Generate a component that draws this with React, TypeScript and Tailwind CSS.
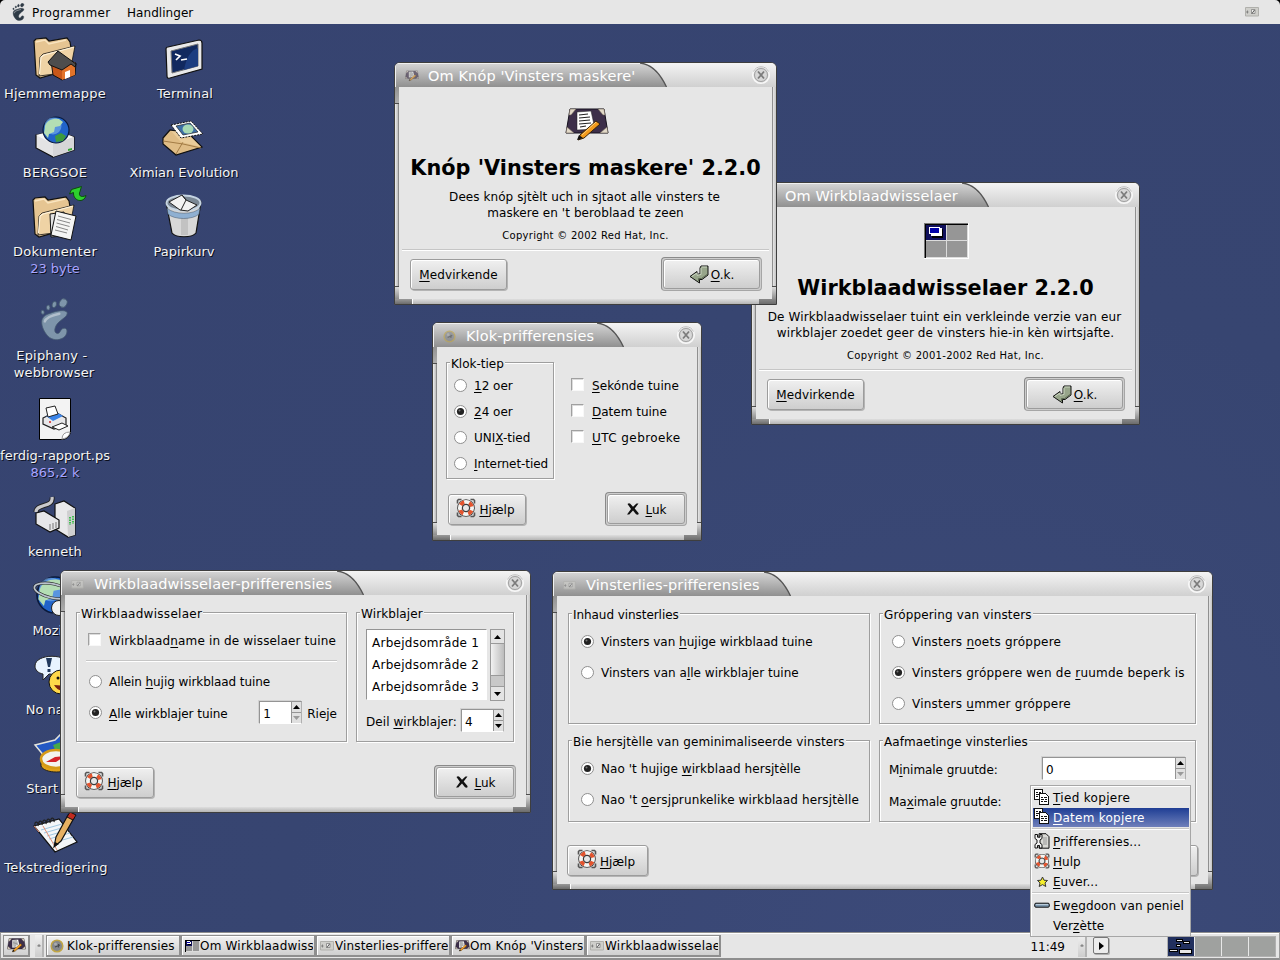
import React from "react";

/* ---------- text with a marked access key: "_Hjælp" ---------- */
function Key({ t, c = "" }: { t: string; c?: string }) {
  const i = t.indexOf("_");
  const cls = "inline-block whitespace-pre pt-[2px] " + c;
  if (i < 0) return <span className={cls}>{t}</span>;
  return (
    <span className={cls}>
      {t.slice(0, i)}
      <span className="underline decoration-1 underline-offset-2">{t[i + 1]}</span>
      {t.slice(i + 2)}
    </span>
  );
}

/* ---------- small icons ---------- */
function DeskPad({ className }: { className: string }) {
  return (
    <svg viewBox="0 0 44 34" className={className}>
      <path d="M5 1H39L43 25H1Z" fill="#3d2f4a" stroke="#15101c" />
      <path d="M5 1h6l-5 6-2 0zM39 1h-6l5 6h2zM1 25l1-6 7 6zM43 25l-1-6-7 6z" fill="#e2d9c8" stroke="#6b6257" strokeWidth=".6" />
      <path d="M12 4l14-1 4 18-18 1z" fill="#fff" stroke="#222" strokeWidth=".5" />
      <path d="M14 7l9-1M14 10l11-1M14 13l11-1M14 16l12-1M15 19l6-1" stroke="#222" strokeWidth="1.100" />
      <path d="M13 32l2-5L31 13l4 3L19 30z" fill="#f39a1c" stroke="#3a2308" />
      <path d="M17 27L31 14" stroke="#ffd27a" />
      <path d="M12 32l2-5 4 3z" fill="#111" />
    </svg>
  );
}
function PagerIcon({ className }: { className: string }) {
  return (
    <svg viewBox="0 0 45 36" className={className} shapeRendering="crispEdges">
      <path d="M0 0h45v36H0z" fill="#fff" />
      <path d="M0 0h44v35H0z" fill="#777" />
      <path d="M1 1h43v34H1z" fill="#000" />
      <path d="M2 2h42v33H2z" fill="#dcdcdc" />
      <path d="M2 2h20v15H2z" fill="#10105c" />
      <path d="M23 2h20v15H23zM2 18h20v16H2zM23 18h20v16H23z" fill="#969696" />
      <path d="M8 6h11v9H8z" fill="#000" />
      <path d="M7 5h11v8H7z" fill="#fff" />
      <path d="M5 4h11v7H5z" fill="#fff" />
      <path d="M6 5h9v5H6z" fill="#0000a8" />
    </svg>
  );
}
function ListIcon({ className }: { className: string }) {
  return (
    <svg viewBox="0 0 14 10" className={className}>
      <path d="M.5.5h13v8.500H.5z" fill="#cfcfcb" stroke="#b0b0ac" />
      <path d="M1 5h2.500M2.500 3.500v3" stroke="#777" strokeWidth=".8" />
      <path d="M6.500 2.500h3.500v4H6.500z" fill="#f2f2f0" stroke="#777" strokeWidth=".7" />
      <path d="M9.500 3L7 6.500" stroke="#444" strokeWidth=".9" />
    </svg>
  );
}
function ClockIcon({ className }: { className: string }) {
  return (
    <svg viewBox="0 0 14 14" className={className}>
      <circle cx="7" cy="7" r="5.800" fill="#85888c" stroke="#c0a545" strokeWidth="1.500" />
      <path d="M5 8l5-2M8.500 5v3.500" stroke="#45484c" strokeWidth="1.200" />
      <circle cx="5.500" cy="5" r="1.500" fill="#a9acb0" />
    </svg>
  );
}
function BuoyIcon({ className }: { className: string }) {
  return (
    <svg viewBox="0 0 20 20" className={className}>
      <path d="M1.500 5.500V2.500l1-1h3M14.500 1.500h3l1 1v3M18.500 14.500v3l-1 1h-3M5.500 18.500h-3l-1-1v-3" fill="none" stroke="#555" strokeWidth="1.600" />
      <circle cx="10" cy="10" r="8.800" fill="#3a3a3a" />
      <circle cx="10" cy="10" r="6.100" fill="none" stroke="#f4f4f1" strokeWidth="3.800" />
      <circle cx="10" cy="10" r="6.100" fill="none" stroke="#e4532d" strokeWidth="3.800" strokeDasharray="4.400 5.182" strokeDashoffset="-2.600" />
      <circle cx="10" cy="10" r="3.600" fill="#e6e6e6" stroke="#333" />
    </svg>
  );
}
function OkIcon() {
  return (
    <svg viewBox="0 0 20 19" className="h-[19px] w-5">
      <path d="M12 1h7v9l-6 4.500H10.500V18L1 11.500l7-5V9h3V3z" fill="#97a58a" stroke="#111" />
      <path d="M12 3v6.500l-4 .8V8L2.800 11.500M12.500 2H18" fill="none" stroke="#cbd5c1" />
      <path d="M18 9.500l-5.500 4H9.500v2.500" fill="none" stroke="#5d6a52" />
    </svg>
  );
}
function CloseX() {
  return (
    <svg viewBox="0 0 14 14" className="mb-px h-[14px] w-[14px]">
      <path d="M1.500 2q1.500-1.200 2.800-.2L7 4.800 10.500 1.500h2L8.700 6.500l3.800 4.500q.5 1.500-1 1.700-1 0-1.700-.7L7 8.600 3.300 12.500H1L5 7z" fill="#111" />
    </svg>
  );
}
function Foot({ className, a, b }: { className: string; a: string; b: string }) {
  return (
    <svg viewBox="0 0 30 44" className={className}>
      <g fill={a} stroke={b} strokeWidth=".8">
        <ellipse cx="24" cy="5" rx="3.800" ry="4.600" transform="rotate(30 24 5)" />
        <ellipse cx="14.800" cy="6.500" rx="2.200" ry="3.200" transform="rotate(15 14.800 6.500)" />
        <ellipse cx="8.500" cy="9.700" rx="1.800" ry="2.600" />
        <ellipse cx="2.800" cy="14.500" rx="1.600" ry="2.100" transform="rotate(-15 2.800 14.500)" />
        <path d="M11 15.500C17 13 26 11.500 28 14.500 29.500 19 21 22 17.500 27 14.500 31.500 14.500 36 18 36.500 21.500 36.500 20.500 31.500 25 31 29.500 31 28.500 38 24 41 19 44 12.500 43.500 8 39 3.500 34 1 27.500 2 22.500 3 18.500 7 16.500 11 15.500z" />
      </g>
      <path d="M5 24c1-4 6-6 15-8" stroke="#fff" strokeOpacity=".4" strokeWidth="2.500" fill="none" strokeLinecap="round" />
    </svg>
  );
}
function CopyIcon() {
  return (
    <svg viewBox="0 0 16 16" className="h-4 w-4" shapeRendering="crispEdges">
      <path d="M.5.5h8v10h-8z" fill="#fff" stroke="#111" />
      <path d="M2 3.500h2m1 0h2M2 5.500h3M2 7.500h2" stroke="#111" />
      <path d="M5.500 4.500h6l3 3v8h-9z" fill="#fff" stroke="#111" />
      <path d="M7 8.500h2m1 0h3M7 10.500h3m1 0h2M7 12.500h2m1 0h3" stroke="#111" />
    </svg>
  );
}
function PrefIcon() {
  return (
    <svg viewBox="0 0 16 16" className="h-4 w-4">
      <path d="M5 .7h7l3 3v11.500H5z" fill="#d9d9d5" stroke="#111" />
      <path d="M9 5h4M9 7h4M9 9h4M9 11h4" stroke="#999" />
      <path d="M1 1.500v4l2 1.500v3l-2 1.500V15h2.500v-2.500h2V15H8v-3.500L6 10V7l2-1.500v-4H6v2.700H3.500V1.500z" fill="#f2f2f2" stroke="#111" />
    </svg>
  );
}
function StarIcon() {
  return (
    <svg viewBox="0 0 16 16" className="h-4 w-4">
      <path d="M8.500 4l1.500 3.200 3.500.3-2.500 2.400.8 3.600-3.300-1.900-3.300 1.900.8-3.600L3.500 7.500 7 7.200z" fill="#f6ef2d" stroke="#333" />
    </svg>
  );
}
function PanelIcon() {
  return (
    <svg viewBox="0 0 16 16" className="h-4 w-4">
      <rect x=".7" y="6.200" width="14.600" height="4" rx="1.200" fill="#7c97ae" stroke="#111" />
      <path d="M2 7.500h12" stroke="#b9cbd9" />
    </svg>
  );
}

/* ---------- widgets ---------- */
function Radio({ on, t, c }: { on?: boolean; t: string; c?: string }) {
  return (
    <div className="flex h-5 items-center gap-[7px]">
      <svg viewBox="0 0 13 13" className="h-[13px] w-[13px]">
        <circle cx="6.500" cy="6.500" r="6" fill="#fff" stroke="#8e8e8e" />
        {on && <circle cx="6.500" cy="6.500" r="3.600" fill="#222" />}
        {on && <circle cx="5.500" cy="5.500" r="1" fill="#777" />}
      </svg>
      <Key t={t} c={c} />
    </div>
  );
}
function Check({ t, c }: { t: string; c?: string }) {
  return (
    <div className="flex h-5 items-center gap-2">
      <span className="mb-[2px] block h-[13px] w-[13px] border border-b-[#f8f8f8] border-l-[#a0a0a0] border-r-[#f8f8f8] border-t-[#a0a0a0] bg-white shadow-[inset_1px_1px_0_#dcdcdc]" />
      <Key t={t} c={c} />
    </div>
  );
}
function Btn({ def, className, children }: { def?: boolean; className: string; children: React.ReactNode }) {
  return (
    <div
      className={
        (def
          ? "rounded-[4px] border border-b-[#a6a6a6] border-l-[#8a8a8a] border-r-[#a6a6a6] border-t-[#8a8a8a] bg-[#cdcdcd] p-px "
          : "rounded-[4px] shadow-[1px_1px_0_#b4b4b4] ") + className
      }
    >
      <div className="flex h-full w-full items-center justify-center gap-1 rounded-[3px] border border-[#9c9c9c] bg-linear-to-b from-[#f0f0f0] to-[#cecece] shadow-[inset_1px_1px_0_#fff]">
        {children}
      </div>
    </div>
  );
}
function HelpBtn({ className }: { className: string }) {
  return (
    <Btn className={className}>
      <BuoyIcon className="mb-[3px] h-5 w-5" />
      <Key t="_Hjælp" c="-ml-px mr-[3px]" />
    </Btn>
  );
}
function LukBtn({ def, className }: { def?: boolean; className: string }) {
  return (
    <Btn def={def} className={className}>
      <CloseX />
      <Key t="_Luk" c="ml-px -mr-px" />
    </Btn>
  );
}
function Group({ title, c = "", className, children }: { title: string; c?: string; className: string; children?: React.ReactNode }) {
  return (
    <div className={"flex flex-col border border-[#9e9e9e] shadow-[1px_1px_0_#fff,inset_1px_1px_0_#fff] " + className}>
      <div className="flex h-0 items-center">
        <span className={"ml-[3px] whitespace-pre bg-[#e6e6e6] px-[1px] pt-[2px] leading-[14px] " + c}>{title}</span>
      </div>
      {children}
    </div>
  );
}
function Arrow({ up, dim }: { up?: boolean; dim?: boolean }) {
  return (
    <svg viewBox="0 0 7 4" className="h-1 w-[7px]">
      <path d={up ? "M0 4L3.500 0 7 4z" : "M0 0h7L3.500 4z"} fill={dim ? "#9a9a9a" : "#000"} />
    </svg>
  );
}
function Spin({ v, className, dim }: { v: string; className: string; dim?: boolean }) {
  return (
    <div className={"flex border border-b-white border-l-[#949494] border-r-[#b0b0b0] border-t-[#949494] bg-white shadow-[-1px_-1px_0_#d2d2d2] " + className}>
      <div className="flex flex-1 items-center pl-[3px] pt-[2px]">{v}</div>
      <div className="flex w-[10px] flex-col border-l border-[#949494] bg-[#e0e0e0]">
        <div className="flex flex-1 items-center justify-center border-b border-[#949494]">
          <Arrow up />
        </div>
        <div className="flex flex-1 items-center justify-center">
          <Arrow dim={dim} />
        </div>
      </div>
    </div>
  );
}
function Rule({ className = "" }: { className?: string }) {
  return <div className={"h-[2px] shrink-0 border-t border-[#c6c6c6] bg-white " + className} />;
}

/* ---------- window frame ---------- */
type WinProps = {
  place: string;
  tab: string;
  title: string;
  icon: React.ReactNode;
  children: React.ReactNode;
};
function Win({ place, tab, title, icon, children }: WinProps) {
  const id = title.replace(/[^a-z]/gi, "");
  return (
    <section className={"absolute flex flex-col overflow-hidden rounded-t-[6px] border border-[#3e3e3e] bg-[#e6e6e6] " + place}>
      <div className="flex h-6 shrink-0 items-stretch bg-linear-to-b from-[#f4f4f4] to-[#d0d0d0]">
        <div className={"flex shrink-0 items-stretch " + tab}>
          <div className="flex min-w-0 flex-1 items-center bg-linear-to-b from-[#d6d6d6] to-[#909090] pl-[9px] shadow-[inset_1px_1px_0_#f0f0f0]">
            <span className="mt-[2px] flex w-[15px] shrink-0 justify-center opacity-60">{icon}</span>
            <span className="ml-[9px] mt-[3px] shrink-0 whitespace-pre text-[14.500px] leading-none tracking-[0.110px] text-white">{title}</span>
          </div>
          <svg viewBox="0 0 27 24" className="h-6 w-[27px] shrink-0">
            <defs>
              <linearGradient id={id} x1="0" y1="0" x2="0" y2="1">
                <stop offset="0" stopColor="#d6d6d6" />
                <stop offset="1" stopColor="#909090" />
              </linearGradient>
            </defs>
            <path d="M0 0C11 1 19 8 26.500 24H0z" fill={"url(#" + id + ")"} />
            <path d="M0 0C11 1 19 8 26.500 24" fill="none" stroke="#555" strokeWidth="1.300" />
          </svg>
        </div>
        <div className="flex-1" />
        <svg viewBox="0 0 20 20" className="mr-[5px] mt-[2px] h-5 w-5">
          <circle cx="10" cy="10" r="8.300" fill="#d4d4d4" stroke="#f8f8f8" strokeWidth="1.600" />
          <path d="M2.500 6.500a8.300 8.300 0 0 1 15 0" fill="none" stroke="#bcbcbc" />
          <circle cx="10" cy="10" r="6.500" fill="#d8d8d8" stroke="#a0a0a0" />
          <path d="M7 6.500l6 7M13 6.500l-6 7" stroke="#7c7c7c" strokeWidth="1.800" />
        </svg>
      </div>
      <div className="flex min-h-0 flex-1">
        <div className="flex w-1 shrink-0 flex-col">
          <div className="h-4 bg-linear-to-b from-[#929292] to-[#adadad]" />
          <div className="h-px bg-[#4c4c4c]" />
          <div className="flex-1 border-r border-[#8a8a8a] bg-linear-to-r from-[#efefef] to-[#bcbcbc]" />
          <div className="h-px bg-[#4c4c4c]" />
          <div className="h-3 bg-linear-to-b from-[#dcdcdc] to-[#8e8e8e]" />
        </div>
        <div className="flex min-w-0 flex-1 flex-col">{children}</div>
        <div className="flex w-1 shrink-0 flex-col">
          <div className="flex-1 border-l border-[#909090] bg-linear-to-r from-[#e6e6e6] to-[#c4c4c4]" />
          <div className="h-px bg-[#4c4c4c]" />
          <div className="h-3 bg-linear-to-b from-[#dcdcdc] to-[#8e8e8e]" />
        </div>
      </div>
      <div className="flex h-[5px] shrink-0">
        <div className="w-[17px] bg-linear-to-b from-[#9a9a9a] to-[#6c6c6c]" />
        <div className="flex-1 border-l border-white bg-linear-to-b from-[#dedede] to-[#b4b4b4]" />
        <div className="w-[17px] bg-linear-to-b from-[#8a8a8a] to-[#6c6c6c]" />
      </div>
    </section>
  );
}

function AboutBody(p: { icon: React.ReactNode; name: string; l1: string; l2: string; copy: string; c: string }) {
  return (
    <>
      <div className="flex h-[69px] items-center justify-center">{p.icon}</div>
      <div className="flex h-[24px] items-center justify-center whitespace-pre text-[20.800px] font-bold leading-none">{p.name}</div>
      <div className={"mr-[2px] mt-[9px] flex h-4 items-center justify-center whitespace-pre " + p.c}>{p.l1}</div>
      <div className={"flex h-4 items-center justify-center whitespace-pre " + p.c}>{p.l2}</div>
      <div className="mt-[7px] flex h-4 items-center justify-center whitespace-pre text-[10px] tracking-[0.280px]">{p.copy}</div>
      <Rule className="mx-[3px] mt-[5px]" />
      <div className="flex items-center justify-between pl-[11px] pr-[10px] pt-[6px]">
        <Btn className="h-[31px] w-[97px]">
          <Key t="_Medvirkende" c="tracking-[0.120px]" />
        </Btn>
        <Btn def className="h-[34px] w-[101px]">
          <OkIcon />
          <Key t="_O.k." c="-ml-[2px]" />
        </Btn>
      </div>
    </>
  );
}

/* ---------- desktop icons ---------- */
function Item({ at, label, sub, c = "", children }: { at: string; label: string[]; sub?: string; c?: string; children: React.ReactNode }) {
  return (
    <div className={"absolute flex w-[130px] flex-col items-center text-[13px] leading-[17px] text-[#f4f4f4] [text-shadow:1px_1px_0_#0b0f1c] " + at}>
      <div className="flex h-12 items-end justify-center">{children}</div>
      <div className={"mt-[5px] flex flex-col items-center whitespace-pre " + c}>
        {label.map((l) => (
          <span key={l}>{l}</span>
        ))}
        {sub && <span className="tracking-normal text-[#a8a4ff]">{sub}</span>}
      </div>
    </div>
  );
}
const I = "h-12 w-12 overflow-visible";
function Folder() {
  return (
    <g>
      <path d="M3 5l2-2 10-1 3 3 18-3 3 4 1 6-3 22-28 8-4-3z" fill="#e6c592" stroke="#111" strokeWidth="1.200" />
      <path d="M5 6l9-2 4 4 17-4" fill="none" stroke="#f9e4bf" strokeWidth="1.500" />
      <path d="M9 21l3-3 32-8-5 26-31 4z" fill="#efd3a5" stroke="#111" strokeWidth=".8" />
      <path d="M8.500 38L10 21l3-2 30-8" fill="none" stroke="#fff4dc" strokeWidth="1.200" />
    </g>
  );
}
function Globe({ cx, cy, r }: { cx: number; cy: number; r: number }) {
  const s = r / 13;
  return (
    <g transform={`translate(${cx} ${cy}) scale(${s})`}>
      <circle r="13" fill="#2163c9" stroke="#0a1a3c" strokeWidth="1.200" />
      <circle cx="-3" cy="-4" r="8.500" fill="#7fb6ee" opacity=".6" />
      <path d="M-11-4C-9-10-3-12 3-11l4 3-3 4-5 1-1 5-5 2-1 4-4-5z" fill="#b4deb4" />
      <path d="M-1 6l6-3 5 3-3 5-7 1z" fill="#3d9a3d" />
    </g>
  );
}

export default function App() {
  return (
    <div className="relative h-[960px] w-[1280px] overflow-hidden bg-[#374571] bg-[radial-gradient(ellipse_at_75%_100%,#3c4a79_0%,#374571_50%,#364370_100%)] font-['DejaVu_Sans','Liberation_Sans',sans-serif] text-[12px] leading-[14px] text-black [font-variant-ligatures:none]">
      <div className="flex h-full flex-col">
        <header className="bg-black">
          <div className="flex h-6 items-center rounded-t-[5px] bg-[#e6e6e6] px-[11px]">
            <Foot className="h-[18px] w-[15px]" a="#2f3b46" b="#2f3b46" />
            <Key t="Programmer" c="ml-[6px] w-[95px] tracking-[0.400px]" />
            <Key t="Handlinger" c="tracking-[0.050px]" />
            <ListIcon className="ml-auto mr-[10px] h-[10px] w-[14px]" />
          </div>
        </header>

        <main className="relative flex-1">
          <div className="absolute inset-x-0 -top-6 h-[932px]">
            <Item at="left-[-10px] top-[32px]" label={["Hjemmemappe"]} c="tracking-[0.180px]">
              <svg viewBox="0 0 48 48" className={I}>
                <g transform="translate(0 4)">
                  <Folder />
                  <path d="M20 25l12-2 13 4-1 12-13 5-9-5z" fill="#c8571a" stroke="#111" />
                  <path d="M31 32v12l13-5V26z" fill="#e2732a" />
                  <path d="M17 26L27 15l18 13-1 3-4-3-9 6-12-5z" fill="#4d4d4d" stroke="#111" />
                  <path d="M34 36l5-2v7l-5 2z" fill="#fff" />
                </g>
              </svg>
            </Item>
            <Item at="left-[120px] top-[32px]" label={["Terminal"]} c="tracking-[0.150px]">
              <svg viewBox="0 0 48 48" className={I}>
                <path d="M5 17q0-2 2-2L38 8q3 0 3 3v26L9 46q-3 1-3-2z" fill="#e9e9ea" stroke="#111" strokeWidth="1.200" />
                <path d="M10 19l27-7v22L11 41z" fill="#11295f" stroke="#777" />
                <path d="M23 38c2-12 7-20 14-22v18z" fill="#1c3d80" />
                <path d="M14 22l5 2-4 4M20 28l6-1" stroke="#fff" strokeWidth="1.700" fill="none" />
              </svg>
            </Item>
            <Item at="left-[-10px] top-[111px]" label={["BERGSOE"]} c="tracking-[0.200px]">
              <svg viewBox="0 0 48 48" className={I}>
                <path d="M5 24l20-4 18 6v13l-21 7L5 37z" fill="#e3e3e4" stroke="#111" strokeWidth="1.200" />
                <path d="M5 24l17 9 21-7-18-7z" fill="#f8f8f8" />
                <path d="M22 33v13l21-7V26z" fill="#d6d6d8" />
                <path d="M37 38l4-1v2l-4 1z" fill="#3a3" />
                <Globe cx={25} cy={19} r={13} />
              </svg>
            </Item>
            <Item at="left-[119px] top-[111px]" label={["Ximian Evolution"]} c="tracking-[-0.050px]">
              <svg viewBox="0 0 48 48" className={I}>
                <path d="M3 27l7-8 18 3 14 14-26 8L3 33z" fill="#e0bd86" stroke="#111" strokeWidth="1.200" />
                <path d="M3 30l20 3 18 4M16 43l7-12" stroke="#a37c45" fill="none" />
                <path d="M11 20l10 11 20 5-14-14z" fill="#eed3a3" opacity=".7" />
                <path d="M11 14l20-4 12 13-22 4z" fill="#fff" stroke="#111" strokeDasharray="2 1" />
                <path d="M16 15l14-3 8 9-15 3z" fill="#3c6ea6" stroke="#222" strokeWidth=".7" />
                <ellipse cx="28" cy="18" rx="5.500" ry="4.500" fill="#a6d8b4" />
              </svg>
            </Item>
            <Item at="left-[-10px] top-[190px]" label={["Dokumenter"]} sub="23 byte" c="tracking-[0.350px]">
              <svg viewBox="0 0 48 48" className={I}>
                <g transform="translate(-1 5)">
                  <Folder />
                  <path d="M20 19l14-2v24l-13 1z" fill="#e2e2e2" stroke="#111" />
                  <path d="M26 16l20 5-5 24-20-5z" fill="#f5f5f4" stroke="#111" />
                  <path d="M28 21l13 3.500M27 24.500l13 3.500M26.500 28l13 3.500M26 31.500l12 3.500M25 35l12 3" stroke="#888" />
                </g>
                <path d="M40.500-.5l10-3-1.500 5c-2 4 1 6.500 6 4-2 8-13 6-12.500-3l-4 1.500z" fill="#2ecf2e" stroke="#0b4d0b" />
              </svg>
            </Item>
            <Item at="left-[119px] top-[190px]" label={["Papirkurv"]}>
              <svg viewBox="0 0 48 48" className={I}>
                <path d="M6 12c0-4 34-6 35 0l-5 31c-4 5-20 5-24 0z" fill="#d8d8d8" stroke="#111" strokeWidth="1.200" />
                <path d="M21 25h7v20h-7z" fill="#b9b9b9" opacity=".7" />
                <path d="M7 18c7 7 27 7 33 0l-1 6c-6 6-25 6-31 0z" fill="#8fb0d2" stroke="#456" strokeWidth=".5" />
                <ellipse cx="23.500" cy="13" rx="17" ry="7.500" fill="#7a8794" stroke="#c5d4e2" strokeWidth="2" />
                <path d="M9 12l13-7 4 5 11 5-9 6-8-1z" fill="#f2f2f2" stroke="#222" />
                <path d="M22 5l4 5-5 10" stroke="#222" fill="none" />
              </svg>
            </Item>
            <Item at="left-[-11px] top-[294px]" label={["Epiphany - ", "webbrowser"]} c="tracking-[0.180px]">
              <Foot className="mb-px h-[43px] w-[29px]" a="#7e95aa" b="#455a70" />
            </Item>
            <Item at="left-[-10px] top-[394px]" label={["ferdig-rapport.ps"]} sub="865,2 k">
              <svg viewBox="0 0 48 48" className={I}>
                <path d="M8.500 4.500h31v34q-2 7-9 7h-22z" fill="#f3f3f3" stroke="#000" />
                <path d="M31 45q0-7 8-7-1 6-8 7z" fill="#fff" stroke="#999" />
                <path d="M12 24l12-6 11 6v7l-12 4-11-5z" fill="#e8e8ea" stroke="#222" strokeWidth="1.200" />
                <path d="M15 22l12-3 5 3-10 5z" fill="#3b84e8" />
                <path d="M15 14l9-2 3 8-10 3z" fill="#fff" stroke="#222" />
                <path d="M21 33l10-4 6 3-9 4z" fill="#fff" stroke="#222" />
                <path d="M18 28h2" stroke="#c22" strokeWidth="1.500" />
              </svg>
            </Item>
            <Item at="left-[-10px] top-[490px]" label={["kenneth"]} c="tracking-[0.150px]">
              <svg viewBox="0 0 48 48" className={I}>
                <path d="M5 22c0-9 18-4 16-15" stroke="#222" strokeWidth="5" fill="none" />
                <path d="M5 22c0-9 18-4 16-15" stroke="#c9c9cc" strokeWidth="3.200" fill="none" />
                <path d="M24 14l9-3 11 7v27l-7 2-13-8z" fill="#e9e9ea" stroke="#111" strokeWidth="1.200" />
                <path d="M36 21l8-3v27l-7 2z" fill="#cfcfd0" />
                <path d="M39 27v8M42 26v8" stroke="#3fbf4f" strokeWidth="2" strokeDasharray="1.500 1" />
                <path d="M5 23l8-2 15 9v8l-9 4L5 34z" fill="#e6e6e8" stroke="#111" strokeWidth="1.200" />
                <path d="M19 34v6M22 33v6M25 32v6" stroke="#777" />
              </svg>
            </Item>
            <Item at="left-[-10px] top-[569px]" label={["Mozilla"]}>
              <svg viewBox="0 0 48 48" className={I}>
                <Globe cx={24} cy={26} r={18} />
                <ellipse cx="22" cy="22" rx="19" ry="7" fill="none" stroke="#222" strokeWidth="3" transform="rotate(12 22 22)" />
                <ellipse cx="22" cy="22" rx="19" ry="7" fill="none" stroke="#b9c2cc" strokeWidth="1.800" transform="rotate(12 22 22)" />
                <circle cx="28" cy="39" r="7.500" fill="#f0f0f0" stroke="#222" />
              </svg>
            </Item>
            <Item at="left-[-10px] top-[648px]" label={["No name"]}>
              <svg viewBox="0 0 48 48" className={I}>
                <path d="M4 18C4 5 38 5 38 18c0 8-12 9-20 8l-6 6v-6c-5-1-8-4-8-8z" fill="#e8f3ff" stroke="#222" />
                <path d="M15 10h6l-2 9h-2zM16.500 21h3v3h-3z" fill="#223a5e" />
                <circle cx="30" cy="34" r="12" fill="#ffd84a" stroke="#111" />
                <path d="M23 37c4 7 10 7 14 1z" fill="#7a1f10" />
                <circle cx="27" cy="30" r="1.500" fill="#111" />
              </svg>
            </Item>
            <Item at="left-[-10px] top-[727px]" label={["Start her"]}>
              <svg viewBox="0 0 48 48" className={I}>
                <path d="M4 18l20-5 6-6 14 6-4 20-26-3z" fill="#2358c4" stroke="#e4e4dc" strokeWidth="1.500" />
                <path d="M22 18l8-3 4 8-9 2z" fill="#48a848" />
                <path d="M10 32v7c3 8 28 8 30 0v-7z" fill="#e0a21a" stroke="#222" />
                <ellipse cx="25" cy="32" rx="15" ry="9" fill="#f3f3ef" stroke="#d59a18" strokeWidth="2.500" />
                <path d="M15 35l9-5 10-1-9 6z" fill="#d3222a" />
              </svg>
            </Item>
            <Item at="left-[-9px] top-[806px]" label={["Tekstredigering"]} c="tracking-[0.250px]">
              <svg viewBox="0 0 48 48" className={I}>
                <path d="M2 20l25-7 18 23-22 10z" fill="#f4f6f8" stroke="#111" strokeWidth="1.200" />
                <path d="M9 24l21-6M12 27l21-6M15 30l21-6M17 33l21-6M20 37l21-6" stroke="#9fc6e0" />
                <path d="M2 20l5 6M11 20l14 24" stroke="#e28f76" />
                <path d="M3 19c-1-4 4-4 3 1m1-2c-1-4 4-4 3 1m1-2c-1-4 4-4 3 1m1-2c-1-4 4-4 3 1m1-2c-1-4 4-4 3 1" stroke="#222" fill="none" strokeWidth="1.300" />
                <path d="M22 41l2-10L36 9l6 3-13 23z" fill="#e6b062" stroke="#111" strokeWidth="1.200" />
                <path d="M35 11l3-5 6 3-3 5z" fill="#c02a20" stroke="#111" />
                <path d="M22 41l1-5 4 2z" fill="#111" />
              </svg>
            </Item>

            <Win
              place="left-[751px] top-[182px] h-[243px] w-[389px]"
              tab="w-[237px]"
              title="Om Wirkblaadwisselaer"
              icon={<PagerIcon className="h-3 w-[14px]" />}
            >
              <AboutBody
                icon={<PagerIcon className="ml-px mb-px h-9 w-[45px]" />}
                name="Wirkblaadwisselaer 2.2.0"
                l1="De Wirkblaadwisselaer tuint ein verkleinde verzie van eur"
                l2="wirkblajer zoedet geer de vinsters hie-in kèn wirtsjafte."
                copy="Copyright © 2001-2002 Red Hat, Inc."
                c="tracking-[0.110px]"
              />
            </Win>

            <Win
              place="left-[394px] top-[62px] h-[243px] w-[383px]"
              tab="w-[272px]"
              title="Om Knóp 'Vinsters maskere'"
              icon={<DeskPad className="h-3 w-[14px]" />}
            >
              <AboutBody
                icon={<DeskPad className="ml-[3px] mt-[7px] h-[34px] w-11" />}
                name="Knóp 'Vinsters maskere' 2.2.0"
                l1="Dees knóp sjtèlt uch in sjtaot alle vinsters te"
                l2="maskere en 't beroblaad te zeen"
                copy="Copyright © 2002 Red Hat, Inc."
                c="tracking-[0.070px]"
              />
            </Win>

            <Win
              place="left-[432px] top-[322px] h-[219px] w-[270px]"
              tab="w-[191px]"
              title="Klok-prifferensies"
              icon={<ClockIcon className="h-[13px] w-[13px]" />}
            >
              <div className="flex flex-1 flex-col pl-[9px] pr-[10px] pt-[15px]">
                <div className="flex">
                  <Group title="Klok-tiep" className="h-[117px] w-[108px]">
                    <div className="mt-[12px] flex flex-col gap-[6px] pl-[7px]">
                      <Radio t="_12 oer" />
                      <Radio on t="_24 oer" />
                      <Radio t="UNI_X-tied" />
                      <Radio t="_Internet-tied" c="tracking-[-0.080px]" />
                    </div>
                  </Group>
                  <div className="ml-[17px] mt-[13px] flex flex-col gap-[6px]">
                    <Check t="_Sekónde tuine" c="tracking-[0.080px]" />
                    <Check t="_Datem tuine" />
                    <Check t="_UTC gebroeke" c="tracking-[0.420px]" />
                  </div>
                </div>
                <div className="mt-[13px] flex items-center justify-between pl-[2px]">
                  <HelpBtn className="h-[31px] w-[78px]" />
                  <LukBtn def className="h-[34px] w-[82px]" />
                </div>
              </div>
            </Win>

            <Win
              place="left-[60px] top-[570px] h-[243px] w-[471px]"
              tab="w-[303px]"
              title="Wirkblaadwisselaer-prifferensies"
              icon={<ListIcon className="h-[9px] w-[13px]" />}
            >
              <div className="flex flex-1 flex-col pl-[11px] pr-[10px] pt-[17px]">
                <div className="flex gap-[9px]">
                  <Group title="Wirkblaadwisselaer" c="tracking-[0.280px]" className="h-[130px] w-[271px]">
                    <div className="mt-[17px] pl-[11px]">
                      <Check t="Wirkblaad_name in de wisselaer tuine" c="tracking-[0.140px]" />
                    </div>
                    <Rule className="mx-[9px] mt-[10px]" />
                    <div className="mt-[9px] pl-3">
                      <Radio t="Allein _hujig wirkblaad tuine" c="tracking-[-0.070px]" />
                    </div>
                    <div className="mt-[10px] flex items-center pl-3">
                      <Radio on t="_Alle wirkblajer tuine" c="tracking-[-0.040px]" />
                      <Spin v="1" dim className="ml-auto h-[23px] w-[43px]" />
                      <span className="ml-[5px] mr-[9px] pt-[2px]">Rieje</span>
                    </div>
                  </Group>
                  <Group title="Wirkblajer" c="tracking-[0.100px]" className="h-[130px] w-[158px]">
                    <div className="ml-[9px] mt-[16px] flex">
                      <div className="flex h-[71px] w-[121px] flex-col border border-b-white border-l-[#949494] border-r-white border-t-[#949494] bg-white pl-[5px] pt-[2px] leading-[22px] tracking-[0.270px]">
                        <span>Arbejdsområde 1</span>
                        <span>Arbejdsområde 2</span>
                        <span>Arbejdsområde 3</span>
                      </div>
                      <div className="ml-[3px] flex h-[72px] w-[15px] flex-col border border-[#9a9a9a] bg-[#c8c8c8]">
                        <div className="flex h-[13px] items-center justify-center bg-[#e4e4e4]">
                          <Arrow up />
                        </div>
                        <div className="h-[33px] border-y border-[#9a9a9a] bg-linear-to-r from-[#f2f2f2] to-[#bcbcbc]" />
                        <div className="flex-1" />
                        <div className="flex h-[14px] items-center justify-center border-t border-[#9a9a9a] bg-[#e4e4e4]">
                          <Arrow />
                        </div>
                      </div>
                    </div>
                    <div className="mt-[8px] flex items-center pl-[9px] pr-[9px]">
                      <Key t="Deil _wirkblajer:" c="tracking-[0.060px]" />
                      <Spin v="4" className="ml-auto h-[23px] w-[43px]" />
                    </div>
                  </Group>
                </div>
                <div className="mt-[23px] flex items-center justify-between">
                  <HelpBtn className="h-[31px] w-[78px]" />
                  <LukBtn def className="h-[34px] w-[82px]" />
                </div>
              </div>
            </Win>

            <Win
              place="left-[552px] top-[571px] h-[319px] w-[661px]"
              tab="w-[238px]"
              title="Vinsterlies-prifferensies"
              icon={<ListIcon className="h-[9px] w-[13px]" />}
            >
              <div className="flex flex-1 flex-col pl-[11px] pr-[10px] pt-[17px]">
                <div className="flex gap-[9px]">
                  <Group title="Inhaud vinsterlies" c="tracking-[-0.060px]" className="h-[111px] w-[302px]">
                    <div className="mt-[17px] flex flex-col gap-[11px] pl-3">
                      <Radio on t="Vinsters van _hujige wirkblaad tuine" />
                      <Radio t="Vinsters van a_lle wirkblajer tuine" c="tracking-[0.030px]" />
                    </div>
                  </Group>
                  <Group title="Gróppering van vinsters" c="tracking-[0.130px]" className="h-[111px] w-[317px]">
                    <div className="mt-[17px] flex flex-col gap-[11px] pl-3">
                      <Radio t="Vinsters _noets gróppere" c="tracking-[0.240px]" />
                      <Radio on t="Vinsters gróppere wen de _ruumde beperk is" c="tracking-[0.220px]" />
                      <Radio t="Vinsters _ummer gróppere" c="tracking-[0.230px]" />
                    </div>
                  </Group>
                </div>
                <div className="mt-4 flex gap-[9px]">
                  <Group title="Bie hersjtèlle van geminimaliseerde vinsters" c="tracking-[0.110px]" className="h-[82px] w-[302px]">
                    <div className="mt-[17px] flex flex-col gap-[11px] pl-3">
                      <Radio on t="Nao 't hujige _wirkblaad hersjtèlle" c="tracking-[0.060px]" />
                      <Radio t="Nao 't _oersjprunkelike wirkblaad hersjtèlle" c="tracking-[0.130px]" />
                    </div>
                  </Group>
                  <Group title="Aafmaetinge vinsterlies" c="tracking-[0.070px]" className="h-[82px] w-[317px]">
                    <div className="mt-[16px] flex flex-col gap-[9px] pl-[9px] pr-[9px]">
                      <div className="flex items-center justify-between">
                        <Key t="M_inimale gruutde:" c="tracking-[-0.060px]" />
                        <Spin v="0" dim className="h-[23px] w-[144px]" />
                      </div>
                      <div className="flex items-center justify-between">
                        <Key t="Ma_ximale gruutde:" c="tracking-[-0.040px]" />
                        <Spin v="0" className="h-[23px] w-[144px]" />
                      </div>
                    </div>
                  </Group>
                </div>
                <div className="mt-[23px] flex items-center justify-between">
                  <HelpBtn className="-ml-px h-[31px] w-[81px]" />
                  <LukBtn className="h-[31px] w-[82px]" />
                </div>
              </div>
            </Win>
          </div>
        </main>

        <footer className="flex h-7 items-start border-b-2 border-l border-r border-t border-b-[#8e8e8e] border-l-[#9a9a9a] border-r-[#9a9a9a] border-t-[#8e8e8e] bg-[#e6e6e6] pt-[2px] shadow-[inset_0_1px_0_#fff]">
          <div className="ml-[2px] flex h-[22px] w-[27px] items-center justify-center border-b-2 border-l border-r-2 border-t border-[#8e8e8e] bg-linear-to-b from-[#f2f2f2] to-[#cfcfcf]">
            <DeskPad className="h-[15px] w-[19px]" />
          </div>
          <Handle className="ml-[5px]" />
          <div className="ml-[2px] flex">
            <Task icon={<ClockIcon className="h-[14px] w-[14px]" />} t="Klok-prifferensies" c="ml-[2px] tracking-[0.180px]" />
            <Task icon={<PagerIcon className="h-3 w-[15px]" />} t="Om Wirkblaadwisselaer" c="tracking-[0.200px]" />
            <Task icon={<ListIcon className="h-[10px] w-[14px]" />} t="Vinsterlies-prifferensies" c="tracking-[0.150px]" />
            <Task icon={<DeskPad className="h-3 w-[15px]" />} t="Om Knóp 'Vinsters maskere'" c="tracking-[0.150px]" />
            <Task icon={<ListIcon className="h-[10px] w-[14px]" />} t="Wirkblaadwisselaer-prifferensies" c="tracking-[0.250px]" />
          </div>
          <span className="ml-auto self-center pt-px">11:49</span>
          <Handle className="ml-[13px]" />
          <div className="ml-[6px] mt-[2px] flex h-[17px] w-[16px] items-center justify-center rounded-[2px] border border-[#777] bg-[#ececec] shadow-[1px_1px_0_#b0b0b0]">
            <svg viewBox="0 0 5 8" className="h-2 w-[5px]">
              <path d="M0 0l5 4-5 4z" fill="#000" />
            </svg>
          </div>
          <div className="ml-[58px] mr-[3px] mt-px flex gap-px border border-[#b0b0b0] bg-[#e8e8e8]">
            <svg viewBox="0 0 26 19" className="h-[19px] w-[26px]" shapeRendering="crispEdges">
              <path d="M0 0h26v19H0z" fill="#22305e" />
              <g fill="#e6e6e6" stroke="#000">
                <path d="M15.500 4.500h6v2h-6zM8.500 2.500h6v2h-6zM8.500 7.500h4v2h-4zM1.500 12.500h8v2h-8zM11.500 12.500h12v4h-12z" />
              </g>
            </svg>
            <div className="w-[26px] bg-[#9fa19f]" />
            <div className="w-[26px] bg-[#9fa19f]" />
            <div className="w-[26px] bg-[#9fa19f]" />
          </div>
        </footer>
      </div>

      <nav className="absolute left-[1030px] top-[785px] w-[161px] border border-[#a6a6a6] bg-[#e6e6e6] p-px shadow-[inset_1px_1px_0_#fff]">
        <MenuRow icon={<CopyIcon />} t="_Tied kopjere" c="tracking-[0.320px]" />
        <MenuRow on icon={<CopyIcon />} t="_Datem kopjere" c="tracking-[0.250px]" />
        <Rule className="my-px" />
        <MenuRow icon={<PrefIcon />} t="_Prifferensies..." c="tracking-[0.180px]" />
        <MenuRow icon={<BuoyIcon className="h-4 w-4" />} t="_Hulp" />
        <MenuRow icon={<StarIcon />} t="_Euver..." />
        <Rule className="my-px" />
        <MenuRow icon={<PanelIcon />} t="Ew_egdoon van peniel" c="tracking-[0.120px]" />
        <MenuRow t="Ver_zètte" c="tracking-[0.150px]" />
      </nav>
    </div>
  );
}

function MenuRow({ icon, t, on, c }: { icon?: React.ReactNode; t: string; on?: boolean; c?: string }) {
  return (
    <div className={"flex items-center " + (on ? "ml-px mt-px h-[19px] bg-linear-to-b from-[#1f3d94] to-[#6f7fba] pb-[2px] pl-px text-white" : "h-5 pl-[2px]")}>
      <span className="mb-px mr-[3px] h-4 w-4 shrink-0">{icon}</span>
      <Key t={t} c={c} />
    </div>
  );
}

function Handle({ className }: { className: string }) {
  return (
    <div className={"flex h-[22px] w-[9px] items-center justify-center border-r-2 border-[#b4b4b4] bg-linear-to-b from-[#f0f0f0] to-[#cdcdcd] " + className}>
      <svg viewBox="0 0 4 4" className="h-1 w-1">
        <path d="M0 2l2-2 2 2-2 1z" fill="#888" />
      </svg>
    </div>
  );
}

function Task({ icon, t, c }: { icon: React.ReactNode; t: string; c: string }) {
  return (
    <div className="flex h-[22px] w-[135px] items-center border-b-2 border-l border-r-2 border-t border-[#8e8e8e] bg-linear-to-b from-[#f2f2f2] to-[#cfcfcf] pl-[2px] shadow-[inset_1px_1px_0_#fff]">
      <span className="flex w-4 shrink-0 justify-center">{icon}</span>
      <span className={"mr-px overflow-hidden whitespace-pre pt-px " + c}>{t}</span>
    </div>
  );
}
